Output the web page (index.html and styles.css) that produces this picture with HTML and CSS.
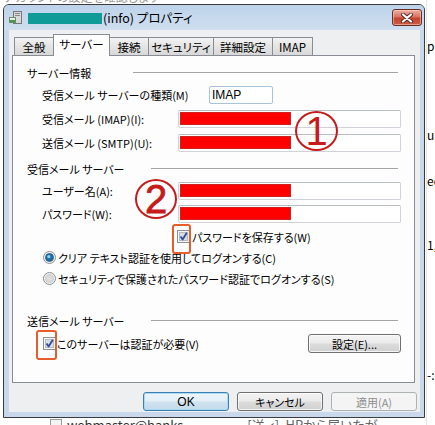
FILE: index.html
```html
<!DOCTYPE html>
<html lang="ja">
<head>
<meta charset="utf-8">
<title>プロパティ</title>
<link rel="stylesheet" href="styles.css">
</head>
<body>
<div class="desk">
  <div class="bg-top">アカウントの設定を確認します</div>
  <div class="bg-right">
    <span class="frag f1">p</span>
    <span class="frag f2">u:</span>
    <span class="frag f3">ed</span>
    <span class="frag f4">1,</span>
    <span class="frag f5">-:</span>
  </div>
  <div class="bg-bottom"><span class="mailico"></span><span>webmaster@hanks...</span><span class="bg-b2">[送ィ]. HPから届いたが</span></div>

  <div class="dlg">
    <div class="titlebar">
      <svg class="appico" width="14" height="14" viewBox="0 0 14 14">
        <rect x="4.5" y="0.5" width="8" height="12" fill="#d8d8d8" stroke="#777"/>
        <rect x="6" y="2" width="5" height="1" fill="#888"/>
        <rect x="6" y="4" width="5" height="1" fill="#888"/>
        <rect x="0.5" y="6.5" width="6" height="5" fill="#e8efe8" stroke="#6b8f6b"/>
        <rect x="1" y="9" width="5" height="2" fill="#3f9a4a"/>
      </svg>
      <span class="redact-t"></span>
      <span class="title">(info) プロパティ</span>
      <span class="close">
        <svg width="14" height="10" viewBox="0 0 14 10">
          <path d="M3 1.5 L11 8.5 M11 1.5 L3 8.5" stroke="#5a2a22" stroke-width="4" stroke-linecap="round"/>
          <path d="M3 1.5 L11 8.5 M11 1.5 L3 8.5" stroke="#ffffff" stroke-width="2.2" stroke-linecap="round"/>
        </svg>
      </span>
    </div>

    <div class="client">
      <div class="tabs">
        <div class="tab t1">全般</div>
        <div class="tab sel t2">サーバー</div>
        <div class="tab t3">接続</div>
        <div class="tab t4">セキュリティ</div>
        <div class="tab t5">詳細設定</div>
        <div class="tab t6">IMAP</div>
      </div>

      <div class="panel">
        <div class="hdr"><span class="hdr-t hw1">サーバー情報</span><span class="hdr-line"></span></div>
        <div class="frow r-type"><span class="lbl lbl-type">受信メール サーバーの種類(M)</span><span class="tbox tbox-s">IMAP</span></div>
        <div class="frow r-gap"><span class="lbl">受信メール (IMAP)(I):</span><span class="tbox"><span class="redact"></span></span></div>
        <div class="frow r-gap"><span class="lbl">送信メール (SMTP)(U):</span><span class="tbox"><span class="redact"></span></span></div>

        <div class="hdr hdr2"><span class="hdr-t hw2">受信メール サーバー</span><span class="hdr-line"></span></div>
        <div class="frow r-gap"><span class="lbl">ユーザー名(A):</span><span class="tbox"><span class="redact"></span></span></div>
        <div class="frow r-gap2"><span class="lbl">パスワード(W):</span><span class="tbox"><span class="redact"></span></span></div>

        <div class="crow r-save">
          <svg class="chk" width="13" height="13" viewBox="0 0 13 13">
            <rect x="0.5" y="0.5" width="12" height="12" fill="#f6f6f6" stroke="#8e8f8f"/>
            <rect x="2.5" y="2.5" width="8" height="8" fill="#d9dee6" stroke="#b4bac3"/>
            <path d="M3.6 6.6 L5.6 9.4 L9.8 2.8" stroke="#2b4d9c" stroke-width="1.8" fill="none" stroke-linejoin="round"/>
          </svg>
          <span class="ctext">パスワードを保存する(W)</span>
        </div>

        <div class="crow r-radio1">
          <svg class="rad" width="13" height="13" viewBox="0 0 13 13">
            <circle cx="6.5" cy="6.5" r="6" fill="#f2f2f2" stroke="#8e8f8f"/>
            <circle cx="6.5" cy="6.5" r="4" fill="#1f6ea3" stroke="#2b5a7e" stroke-width="0.8"/>
            <circle cx="5.8" cy="5.6" r="1.6" fill="#8fd3f6"/>
          </svg>
          <span class="ctext">クリア テキスト認証を使用してログオンする(C)</span>
        </div>
        <div class="crow r-radio2">
          <svg class="rad" width="13" height="13" viewBox="0 0 13 13">
            <circle cx="6.5" cy="6.5" r="6" fill="#f2f2f2" stroke="#8e8f8f"/>
            <circle cx="6.5" cy="6.5" r="4" fill="#dcdcdc" stroke="#c4c4c4" stroke-width="0.8"/>
          </svg>
          <span class="ctext">セキュリティで保護されたパスワード認証でログオンする(S)</span>
        </div>

        <div class="hdr hdr3"><span class="hdr-t hw2">送信メール サーバー</span><span class="hdr-line"></span></div>
        <div class="crow r-auth">
          <svg class="chk" width="13" height="13" viewBox="0 0 13 13">
            <rect x="0.5" y="0.5" width="12" height="12" fill="#f6f6f6" stroke="#8e8f8f"/>
            <rect x="2.5" y="2.5" width="8" height="8" fill="#d9dee6" stroke="#b4bac3"/>
            <path d="M3.6 6.6 L5.6 9.4 L9.8 2.8" stroke="#2b4d9c" stroke-width="1.8" fill="none" stroke-linejoin="round"/>
          </svg>
          <span class="ctext">このサーバーは認証が必要(V)</span>
          <span class="btn btn-set">設定(E)...</span>
        </div>
      </div>

      <div class="btnrow">
        <span class="btn btn-def">OK</span>
        <span class="btn">キャンセル</span>
        <span class="btn btn-dis">適用(A)</span>
      </div>
    </div>
  </div>

  <div class="mark m1">1</div>
  <div class="mark m2">2</div>
  <div class="hl hl1"></div>
  <div class="hl hl2"></div>
</div>
</body>
</html>
```

FILE: styles.css
```css
* { box-sizing: border-box; }
html, body { margin: 0; padding: 0; background: #ffffff; }
body {
  font-family: "Noto Sans CJK JP", "Noto Sans", sans-serif;
  font-size: 11px;
  color: #000;
  font-feature-settings: "palt" 1;
}
.desk {
  position: relative;
  width: 435px;
  height: 425px;
  overflow: hidden;
  background: #ffffff;
}

/* background window fragments */
.bg-top {
  position: absolute;
  left: 4px;
  top: -11px;
  color: #9a9a9a;
  font-size: 12px;
  line-height: 16px;
}
.bg-right {
  position: absolute;
  left: 426px;
  top: 0;
  width: 12px;
  height: 425px;
  display: flex;
  flex-direction: column;
  font-size: 12px;
  line-height: 12px;
  border-left: 1px solid #e6e6e6;
}
.frag { display: block; height: 12px; }
.f1 { margin-top: 40px; }
.f2 { margin-top: 77px; }
.f3 { margin-top: 34px; }
.f4 { margin-top: 52px; }
.f5 { margin-top: 118px; }
.bg-bottom {
  position: absolute;
  left: 50px;
  top: 416px;
  display: flex;
  align-items: flex-start;
  gap: 5px;
  font-size: 13px;
  line-height: 18px;
  color: #333;
  white-space: nowrap;
}
.mailico {
  width: 12px;
  height: 12px;
  margin-top: 3px;
  border: 1px solid #9a9a9a;
  background: #f4f4f4;
}
.bg-b2 { margin-left: 48px; color: #666; }

/* dialog window */
.dlg {
  position: absolute;
  z-index: 1;
  left: 3px;
  top: 4px;
  width: 422px;
  height: 414px;
  border: 1px solid #3b3b3b;
  border-radius: 6px 6px 0 0;
  background: #c9d9eb;
  padding: 0 4px 5px 5px;
  display: flex;
  flex-direction: column;
}
.titlebar {
  height: 25px;
  margin: 0 -4px 0 -5px;
  padding-left: 5px;
  display: flex;
  align-items: center;
  background: linear-gradient(#bdd3ea, #c8daee 60%, #cfdef0);
  border-radius: 5px 5px 0 0;
}
.appico { flex: none; margin-top: 1px; }
.redact-t {
  width: 74px;
  height: 11px;
  margin-left: 5px;
  margin-top: 2px;
  background: #0f9b98;
}
.title {
  margin-left: 1px;
  margin-top: 1px;
  font-size: 12.5px;
  line-height: 16px;
  white-space: nowrap;
}
.close {
  margin-left: auto;
  margin-right: 2px;
  align-self: flex-start;
  margin-top: 4px;
  width: 30px;
  height: 17px;
  border: 1px solid #6d2c22;
  border-radius: 3px;
  background: linear-gradient(#eab1a4, #d7705f 48%, #c2432f 52%, #cc5c46);
  display: flex;
  align-items: center;
  justify-content: center;
  box-shadow: inset 0 0 0 1px rgba(255,220,210,0.5);
}

.client {
  flex: 1;
  background: #eeeff1;
  padding: 4px 5px 0 3px;
  display: flex;
  flex-direction: column;
}

/* tabs */
.tabs {
  height: 21px;
  padding-left: 2px;
  display: flex;
  align-items: flex-end;
  position: relative;
  z-index: 2;
}
.tab {
  height: 18px;
  margin-left: -1px;
  border: 1px solid #898c95;
  border-bottom: none;
  background: linear-gradient(#f3f3f3, #e4e4e4 50%, #d8d8d8);
  display: flex;
  align-items: center;
  justify-content: center;
  font-size: 11.5px;
  line-height: 14px;
  white-space: nowrap;
}
.t1 { width: 40px; margin-left: 0; }
.t2 { width: 57px; }
.t3 { width: 40px; }
.t4 { width: 66px; }
.t5 { width: 60px; }
.t6 { width: 41px; }
.tab.sel {
  height: 22px;
  margin-bottom: -1px;
  background: #fdfdfd;
  position: relative;
  z-index: 3;
  padding-bottom: 3px;
}
.sel + .tab { border-left-color: transparent; }

.panel {
  width: 403px;
  height: 328px;
  border: 1px solid #898c95;
  background: #fdfdfd;
  padding: 10px 13px 0 14px;
  display: flex;
  flex-direction: column;
  position: relative;
  z-index: 1;
}

.hdr {
  height: 14px;
  display: flex;
  align-items: center;
  line-height: 14px;
}
.hdr2 { margin-top: 10px; }
.hdr3 { margin-top: 29px; }
.hdr-t { flex: none; white-space: nowrap; }
.hw1 { width: 106px; }
.hw2 { width: 124px; }
.hdr-line {
  flex: 1;
  height: 2px;
  margin-right: 3px;
  border-top: 1px solid #a3a3a3;
  border-bottom: 1px solid #ffffff;
}

.frow {
  height: 18px;
  padding-left: 15px;
  display: flex;
  align-items: center;
}
.r-type { margin-top: 6px; }
.r-gap { margin-top: 6px; }
.r-gap2 { margin-top: 5px; }
.lbl {
  width: 136px;
  flex: none;
  white-space: nowrap;
  line-height: 14px;
}
.lbl-type { width: 167px; }
.tbox {
  width: 223px;
  height: 18px;
  border: 1px solid #cfd3d9;
  border-top-color: #b9bdc4;
  border-radius: 2px;
  background: #ffffff;
  padding: 1px;
  display: flex;
}
.tbox-s {
  width: 64px;
  border-color: #a9c3dc;
  padding: 0 2px;
  align-items: center;
  line-height: 14px;
  font-family: "Liberation Sans", "Noto Sans", sans-serif;
  font-size: 12px;
}
.redact {
  width: 111px;
  height: 13px;
  background: #ff0000;
  border: 1px solid #d02020;
}

.crow {
  height: 13px;
  display: flex;
  align-items: center;
  line-height: 14px;
}
.chk, .rad { flex: none; }
.ctext { margin-left: 2px; white-space: nowrap; }
.r-save { margin-top: 7px; padding-left: 150px; }
.r-radio1 { margin-top: 8px; padding-left: 16px; }
.r-radio2 { margin-top: 8px; padding-left: 16px; }
.r-auth { margin-top: 6px; height: 19px; padding-left: 16px; }
.r-auth .ctext { margin-left: 1px; }

.btn {
  width: 86px;
  height: 19px;
  border: 1px solid #707070;
  border-radius: 3px;
  background: linear-gradient(#f3f3f3, #ebebeb 48%, #dcdcdc 52%, #d0d0d0);
  box-shadow: inset 0 0 0 1px rgba(255,255,255,0.75);
  display: flex;
  align-items: center;
  justify-content: center;
  line-height: 14px;
  white-space: nowrap;
}
.btn-set { width: 93px; margin-left: auto; }
.btnrow {
  margin-top: 9px;
  margin-right: -2px;
  display: flex;
  justify-content: flex-end;
  gap: 8px;
}
.btn-def {
  border-color: #3c7fb1;
  background: linear-gradient(#eef6fb, #e2eef6 48%, #cfe2ef 52%, #c4dbeb);
  box-shadow: inset 0 0 0 1px #a8daf5;
  font-family: "Liberation Sans", "Noto Sans", sans-serif;
  font-size: 12px;
}
.btn-dis {
  border-color: #adb2b5;
  background: #f4f4f4;
  box-shadow: none;
  color: #8d8d8d;
}

/* annotations */
.mark {
  position: absolute;
  z-index: 10;
  width: 43px;
  height: 40px;
  border: 2px solid #c51b1b;
  border-radius: 50%;
  color: #c51b1b;
  font-family: "Liberation Sans", sans-serif;
  font-size: 40px;
  line-height: 36px;
  text-align: center;
  font-feature-settings: normal;
}
.m1 { left: 295px; top: 111px; }
.m2 { left: 135px; top: 179px; width: 42px; -webkit-text-stroke: 0.8px #c51b1b; }
.hl {
  position: absolute;
  z-index: 10;
  border: 2px solid #e65e2b;
  border-radius: 3px;
}
.hl1 { left: 172px; top: 224px; width: 19px; height: 30px; }
.hl2 { left: 36px; top: 330px; width: 21px; height: 30px; }
```
